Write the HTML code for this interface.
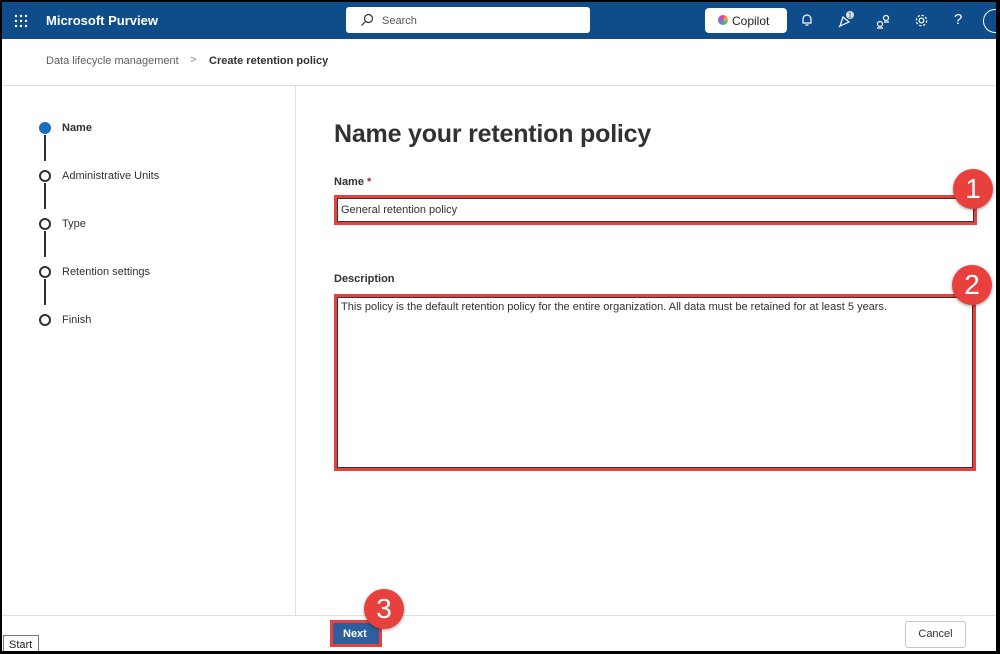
<!DOCTYPE html>
<html><head><style>
*{box-sizing:border-box;margin:0;padding:0}
body{width:1000px;height:654px;position:relative;background:#000;font-family:"Liberation Sans",sans-serif;overflow:hidden}
.pg{position:absolute;left:2px;top:2px;width:994px;height:649px;background:#fff;overflow:hidden}
.hdr{position:absolute;left:0;top:0;width:994px;height:37px;background:#0f4c8a;color:#fff}
.a{position:absolute}
.t{font-size:11px;color:#323130}
.badge{position:absolute;width:40px;height:40px;border-radius:50%;background:#e8413d;color:#fff;font-size:28px;text-align:center;line-height:40px;box-shadow:0 1px 3px rgba(0,0,0,.4)}
.dot{position:absolute;left:37px;width:12px;height:12px;border:2px solid #323130;border-radius:50%;background:#fff}
.vl{position:absolute;left:42px;width:2px;height:26px;background:#323130}
</style></head><body>
<div class="pg">
<div class="hdr">
 <svg class="a" style="left:12px;top:12px" width="14" height="14" viewBox="0 0 14 14" fill="#fff"><circle cx="2" cy="2" r="1.2"/><circle cx="7" cy="2" r="1.2"/><circle cx="12" cy="2" r="1.2"/><circle cx="2" cy="7" r="1.2"/><circle cx="7" cy="7" r="1.2"/><circle cx="12" cy="7" r="1.2"/><circle cx="2" cy="12" r="1.2"/><circle cx="7" cy="12" r="1.2"/><circle cx="12" cy="12" r="1.2"/></svg>
 <div class="a" style="left:44px;top:11px;font-size:13px;font-weight:bold">Microsoft Purview</div>
 <div class="a" style="left:344px;top:5px;width:244px;height:26px;background:#fff;border-radius:3px"></div>
 <svg class="a" style="left:358px;top:11px" width="14" height="14" viewBox="0 0 14 14" fill="none" stroke="#333" stroke-width="1.2"><circle cx="8.5" cy="5.5" r="4"/><path d="M5.5 8.5L1.5 12.5"/></svg>
 <div class="a" style="left:380px;top:13px;font-size:11px;color:#555">Search</div>
 <div class="a" style="left:703px;top:6px;width:82px;height:25px;background:#fff;border-radius:4px"></div>
 <div class="a" style="left:716px;top:13px;width:10px;height:10px;border-radius:50%;background:conic-gradient(#e8477f,#f7a23b,#46c16b,#3b8ff0,#b44de0,#e8477f)"></div>
 <div class="a" style="left:730px;top:12px;font-size:12px;color:#222">Copilot</div>
 <svg class="a" style="left:798px;top:11px" width="14" height="14" viewBox="0 0 14 14" fill="none" stroke="#fff" stroke-width="1.2"><path d="M3 10V6a4 4 0 018 0v4H3zM5.5 12h3"/></svg>
 <svg class="a" style="left:835px;top:9px" width="18" height="18" viewBox="0 0 18 18" fill="none" stroke="#fff" stroke-width="1.2"><path d="M3 15l3-9 6 5z M2 16l2-2"/><circle cx="13" cy="4" r="4" fill="#ddd" stroke="none"/><text x="13" y="6.5" font-size="7" fill="#0f4c8a" stroke="none" text-anchor="middle">1</text></svg>
 <svg class="a" style="left:873px;top:11px" width="16" height="16" viewBox="0 0 16 16" fill="none" stroke="#fff" stroke-width="1.2"><circle cx="5" cy="11" r="2.5"/><circle cx="11" cy="5" r="2.5"/><path d="M2 15h6M9 9h5"/></svg>
 <svg class="a" style="left:912px;top:11px" width="15" height="15" viewBox="0 0 16 16" fill="none" stroke="#fff" stroke-width="1.3"><circle cx="8" cy="8" r="2.5"/><circle cx="8" cy="8" r="5.5" stroke-dasharray="2.5 1.8"/></svg>
 <div class="a" style="left:952px;top:9px;font-size:15px">?</div>
 <div class="a" style="left:981px;top:7px;width:24px;height:24px;border:1.5px solid #fff;border-radius:50%"></div>
</div>
<div class="a t" style="left:44px;top:53px;color:#605e5c">Data lifecycle management</div>
<div class="a t" style="left:188px;top:52px;color:#8a8886">&gt;</div>
<div class="a t" style="left:207px;top:53px;font-weight:bold;color:#323130">Create retention policy</div>
<div class="a" style="left:0;top:83px;width:994px;height:1px;background:#e1dfdd"></div>
<div class="a" style="left:293px;top:84px;width:1px;height:530px;background:#e1dfdd"></div>
<div class="a" style="left:0;top:613px;width:994px;height:1px;background:#e1dfdd"></div>
<div class="dot" style="top:120px;background:#1b6ec2;border-color:#1b6ec2"></div>
<div class="vl" style="top:133px"></div>
<div class="dot" style="top:168px"></div>
<div class="vl" style="top:181px"></div>
<div class="dot" style="top:216px"></div>
<div class="vl" style="top:229px"></div>
<div class="dot" style="top:264px"></div>
<div class="vl" style="top:277px"></div>
<div class="dot" style="top:312px"></div>
<div class="a t" style="left:60px;top:120px;font-weight:bold">Name</div>
<div class="a t" style="left:60px;top:168px">Administrative Units</div>
<div class="a t" style="left:60px;top:216px">Type</div>
<div class="a t" style="left:60px;top:264px">Retention settings</div>
<div class="a t" style="left:60px;top:312px">Finish</div>
<div class="a" style="left:332px;top:118px;font-size:25px;font-weight:bold;color:#323130;letter-spacing:-.2px">Name your retention policy</div>
<div class="a t" style="left:332px;top:174px;font-weight:bold">Name <span style="color:#a4262c">*</span></div>
<div class="a" style="left:332px;top:193px;width:643px;height:30px;border:3px solid #e8413d;box-shadow:inset 0 0 0 1px #333"></div>
<div class="a t" style="left:339px;top:202px">General retention policy</div>
<div class="a t" style="left:332px;top:271px;font-weight:bold">Description</div>
<div class="a" style="left:332px;top:292px;width:642px;height:177px;border:3px solid #e8413d;box-shadow:inset 0 0 0 1px #333"></div>
<div class="a t" style="left:339px;top:299px">This policy is the default retention policy for the entire organization. All data must be retained for at least 5 years.</div>
<div class="badge" style="left:951px;top:167px">1</div>
<div class="badge" style="left:950px;top:263px">2</div>
<div class="a" style="left:328px;top:618px;width:52px;height:27px;border:3px solid #e8413d;background:#2c5f9e"></div>
<div class="a" style="left:341px;top:626px;font-size:11px;font-weight:bold;color:#fff">Next</div>
<div class="badge" style="left:362px;top:587px">3</div>
<div class="a" style="left:903px;top:619px;width:61px;height:27px;border:1px solid #c8c6c4;border-radius:3px;font-size:11px;text-align:center;line-height:25px;color:#323130">Cancel</div>
<div class="a" style="left:1px;top:633px;width:36px;height:18px;border:1px solid #777;background:#fff;font-size:11px;padding:3px 0 0 5px;color:#222">Start</div>
</div>
</body></html>
